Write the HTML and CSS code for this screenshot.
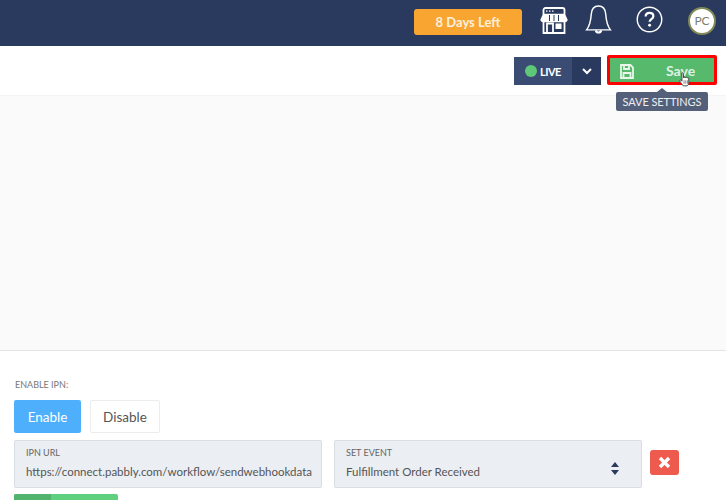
FILE: index.html
```html
<!DOCTYPE html>
<html lang="en">
<head>
<meta charset="utf-8">
<title>IPN settings</title>
<link rel="stylesheet" href="styles.css">
</head>
<body>
<header class="topbar">
  <span class="days">8 Days Left</span>
  <svg class="ic ic-store" viewBox="0 0 28 27" fill="none" stroke="#fff" stroke-width="1.800">
    <path d="M3.500 7.500V3a2 2 0 0 1 2-2h17a2 2 0 0 1 2 2v4.500"/>
    <path d="M6 4.200h1.500M9 4.200h1.500M12 4.200h1.500" stroke-width="1.300"/>
    <path d="M3.500 7.500h21l2.500 5.500a2.500 2.500 0 0 1-3 1.500H4a2.500 2.500 0 0 1-3-1.500z" fill="#fff" stroke-width="1.400"/>
    <path d="M9.500 8v6M14 8v6M18.500 8v6" stroke="#2a3a5e" stroke-width="1"/>
    <path d="M3.500 14.500V26h21V14.500"/>
    <path d="M7 26V16.500h6V26" stroke-width="1.800"/>
    <rect x="15.500" y="16.500" width="6" height="5.500" fill="#fff" stroke="none"/>
  </svg>
  <svg class="ic ic-bell" viewBox="0 0 26 28" fill="none" stroke="#fff" stroke-width="1.400">
    <path d="M13 1C8.500 1 6.300 4.500 6 9c-.4 6-1 10.500-4.500 15h23C21 19.500 20.400 15 20 9c-.3-4.500-2.500-8-7-8z"/>
    <path d="M10.300 24.500a2.800 2.800 0 0 0 5.400 0" stroke-width="2"/>
  </svg>
  <svg class="ic ic-help" viewBox="0 0 28 28" fill="none" stroke="#fff" stroke-width="1.500">
    <circle cx="14" cy="14" r="12.700"/>
    <path d="M10 11c0-2.400 1.800-3.800 4-3.800s4 1.300 4 3.400c0 3-3.900 3-3.900 5.700" stroke-width="2.300"/>
    <circle cx="14.100" cy="20" r="1.500" fill="#fff" stroke="none"/>
  </svg>
  <span class="avatar">PC</span>
</header>

<section class="toolbar">
  <div class="live">
    <span class="live-state"><i class="dot"></i>LIVE</span>
    <span class="live-caret">
      <svg width="10" height="7" viewBox="0 0 10 7" fill="none" stroke="#fff" stroke-width="2"><path d="M1 1l4 4 4-4"/></svg>
    </span>
  </div>
  <div class="save">
    <svg class="save-ic" width="14" height="15" viewBox="0 0 14 15" fill="none" stroke="#e8f6eb" stroke-width="1.800">
      <path d="M1 1h9.500L13 3.500V14H1z"/>
      <path d="M4 1v4h5V1M3.500 14V9h7v5"/>
    </svg>
    <span class="save-label">Save</span>
    <svg class="hand" width="11" height="17" viewBox="0 0 13 18">
      <path d="M3.500 1.500c.8-.8 1.800-.3 1.800.7V7c.3-1 2-1 2.200 0 .3-.9 1.900-.9 2.100.2.400-.6 1.900-.4 1.900.8v4.500c0 2-1 3.500-2 4H5c-1-1.200-3-3.700-4-5.500-.5-1 .6-1.900 1.500-1l1 1V2.500z" fill="#fff" stroke="#333" stroke-width="1"/>
      <path d="M6 10v4M8 10v4M10 10v4" stroke="#555" stroke-width=".8"/>
    </svg>
    <div class="tip">SAVE SETTINGS</div>
  </div>
</section>

<main class="canvas"></main>

<section class="panel">
  <div class="panel-label">ENABLE IPN:</div>
  <div class="toggle">
    <button class="btn btn-on">Enable</button>
    <button class="btn btn-off">Disable</button>
  </div>
  <div class="fields">
    <div class="field">
      <div class="field-label">IPN URL</div>
      <div class="field-value">https://connect.pabbly.com/workflow/sendwebhookdata</div>
    </div>
    <div class="field field-select">
      <div class="field-label">SET EVENT</div>
      <div class="field-value">Fulfillment Order Received</div>
      <svg class="updown" width="8" height="13" viewBox="0 0 8 13" fill="#2a3a5e"><path d="M4 0l4 5H0zM4 13L0 8h8z"/></svg>
    </div>
    <button class="del">
      <svg width="13" height="13" viewBox="0 0 13 13" fill="none" stroke="#fff" stroke-width="3.400"><path d="M2 2l9 9M11 2l-9 9"/></svg>
    </button>
  </div>
  <div class="add"><span class="add-side"></span></div>
</section>
</body>
</html>
```

FILE: styles.css
```css
* { box-sizing: border-box; }
html, body { margin: 0; height: 500px; overflow: hidden; background: #fff; }
body { font-family: "Lato", "Noto Sans", sans-serif; color: #444; }

.topbar {
  height: 46px;
  background: #2a3a5e;
  display: flex;
  align-items: center;
  padding-right: 10px;
}
.days {
  flex: none;
  margin: 0 0 2px 414px;
  width: 108px;
  height: 26px;
  border-radius: 3px;
  background: #f8a532;
  color: #fdf0dc;
  font-weight: 700;
  font-size: 13px;
  display: flex;
  align-items: center;
  justify-content: center;
}
.ic { display: block; flex: none; }
.ic-store { width: 28px; height: 27px; margin: 0 0 6px 18px; }
.ic-bell { width: 27px; height: 29px; margin: 0 0 8px 17px; }
.ic-help { width: 27px; height: 27px; margin: 0 0 7px 24px; }
.avatar {
  flex: none;
  width: 28px;
  height: 28px;
  margin: 0 0 5px 25px;
  border-radius: 50%;
  background: #fff;
  border: 2px solid #7f8a55;
  color: #7b7f70;
  font-size: 12px;
  display: flex;
  align-items: center;
  justify-content: center;
}

.toolbar {
  height: 50px;
  display: flex;
  align-items: flex-start;
  justify-content: flex-end;
  padding: 9px 9px 0 0;
  background: #fff;
  border-bottom: 1px solid #f4f4f4;
}
.live {
  display: flex;
  height: 28px;
  margin-top: 2px;
  width: 87px;
  background: #3a4b74;
  color: #fff;
  font-size: 11px;
  font-weight: 700;
}
.live-state {
  width: 58px;
  display: flex;
  align-items: center;
  padding-left: 11px;
  letter-spacing: -.5px;
}
.dot {
  width: 12px;
  height: 12px;
  margin-right: 3px;
  border-radius: 50%;
  background: #5fc878;
}
.live-caret {
  width: 29px;
  background: #2a3a5e;
  display: flex;
  align-items: center;
  justify-content: center;
}
.save {
  position: relative;
  width: 110px;
  height: 30px;
  margin-left: 6px;
  background: #56b96c;
  border: 3px solid #f00;
  border-radius: 2px;
  color: #dff1e3;
  font-size: 14px;
  font-weight: 700;
  display: flex;
  align-items: center;
}
.save-ic { margin: 2px 0 0 10px; }
.save-label { margin-left: 32px; }
.hand { position: absolute; left: 69px; top: 13px; }
.tip {
  position: absolute;
  left: 6px;
  top: 34px;
  width: 92px;
  height: 19px;
  border-radius: 2px;
  background: #54607a;
  color: #eceef2;
  font-size: 11px;
  font-weight: 400;
  letter-spacing: -.1px;
  display: flex;
  align-items: center;
  justify-content: center;
}
.tip::before {
  content: "";
  position: absolute;
  left: 41px;
  top: -4px;
  border: 5px solid transparent;
  border-top: 0;
  border-bottom: 4px solid #54607a;
}

.canvas {
  height: 255px;
  background: #fafafa;
  border-bottom: 1px solid #e4e4e4;
}

.panel { padding: 0 14px; background: #fff; }
.panel-label {
  padding: 28px 0 0 1px;
  height: 49px;
  font-size: 9px;
  line-height: 11px;
  color: #777;
}
.toggle { display: flex; gap: 9px; }
.btn {
  height: 33px;
  padding: 0;
  font: inherit;
  font-size: 13.500px;
  border-radius: 2px;
}
.btn-on { width: 67px; background: #4eb0fd; border: 0; color: #fff; }
.btn-off { width: 70px; background: #fff; border: 1px solid #ececec; color: #555; }
.fields { display: flex; margin-top: 7px; align-items: flex-start; }
.field {
  position: relative;
  width: 308px;
  height: 48px;
  padding: 6px 11px;
  background: #ebeef3;
  border: 1px solid #d9dde4;
  border-radius: 2px;
}
.field-select { margin-left: 12px; }
.field-label { font-size: 9px; line-height: 12px; color: #666; }
.field-value { margin-top: 5px; font-size: 11.500px; line-height: 16px; color: #555; white-space: nowrap; }
.updown { position: absolute; right: 22px; top: 21px; }
.del {
  width: 29px;
  height: 25px;
  margin: 10px 0 0 8px;
  padding: 0;
  border: 0;
  border-radius: 3px;
  background: #ee5a4d;
  display: flex;
  align-items: center;
  justify-content: center;
}
.add {
  width: 104px;
  height: 30px;
  margin-top: 6px;
  background: #5fd07d;
  border-radius: 2px 2px 0 0;
  overflow: hidden;
}
.add-side { display: block; width: 37px; height: 100%; background: #52b36c; }
```
